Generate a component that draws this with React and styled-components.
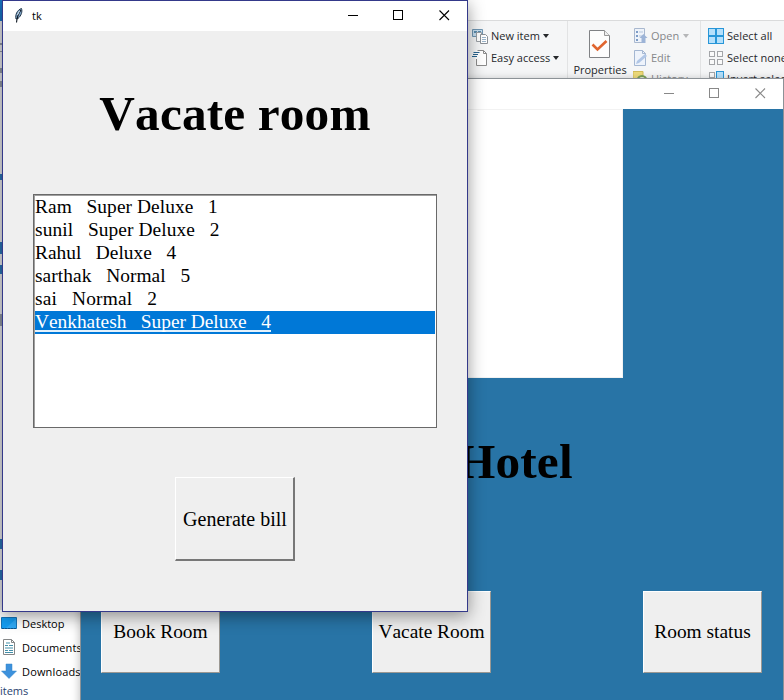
import React from "react";
import styled, { createGlobalStyle } from "styled-components";

const Global = createGlobalStyle`
  * { box-sizing: border-box; }
  body { margin: 0; background: #fff; overflow: hidden; }
`;

const Screen = styled.div`
  position: relative;
  width: 784px;
  height: 700px;
  overflow: hidden;
  background: #fff;
  font-family: "Open Sans", "Noto Sans", sans-serif;
  font-size: 11px;
  color: #1e1e1e;
`;

/* ---------- file explorer ---------- */
const Explorer = styled.div`
  display: flex;
  flex-direction: column;
  height: 700px;
`;
const ExplorerTop = styled.div`
  height: 21px;
  border-bottom: 1px solid #dadbdc;
`;
const Ribbon = styled.div`
  display: flex;
  height: 92px;
  padding-left: 468px;
  background: #f5f6f7;
  border-bottom: 1px solid #dadbdc;
`;
const RibbonGroup = styled.div`
  width: ${(p) => p.$w}px;
  flex: none;
  display: flex;
  border-right: 1px solid #e2e3e4;
`;
const RibbonColumn = styled.div`
  display: flex;
  flex-direction: column;
  padding-top: 4px;
  padding-left: ${(p) => p.$left || 0}px;
`;
const RibbonItem = styled.div`
  display: flex;
  align-items: center;
  height: ${(p) => p.$h || 22}px;
  gap: ${(p) => p.$gap || 3}px;
  white-space: nowrap;
  letter-spacing: ${(p) => p.$track || 0}px;
  color: ${(p) => (p.$off ? "#85878a" : "#26282b")};
  svg { flex: none; }
`;
const Label = styled.span`
  margin-top: -1px;
`;
const BigItem = styled.div`
  display: flex;
  flex-direction: column;
  align-items: center;
  width: 64px;
  padding-top: 9px;
  gap: 3px;
  color: #26282b;
  line-height: 15px;
`;
const Caret = styled.span`
  border: 3.5px solid transparent;
  border-top: 4px solid ${(p) => (p.$off ? "#b5b6b8" : "#26282b")};
  border-bottom: 0;
  margin: -1px 0 0 1px;
`;
const NavPane = styled.div`
  flex: 1;
  display: flex;
  flex-direction: column;
  justify-content: flex-end;
  width: 81px;
  overflow: hidden;
`;
const NavItem = styled.div`
  display: flex;
  align-items: center;
  gap: 5px;
  height: 24px;
  padding-left: 1px;
  white-space: nowrap;
  letter-spacing: ${(p) => p.$track || 0}px;
  color: #000;
  svg { flex: none; }
`;
const Status = styled.div`
  height: 17px;
  line-height: 16px;
  color: #29436f;
`;
const EdgeMarks = styled.svg`
  position: absolute;
  left: 0;
  top: 0;
`;

/* ---------- windows ---------- */
const Window = styled.section`
  position: absolute;
  left: ${(p) => p.$x}px;
  top: ${(p) => p.$y}px;
  width: ${(p) => p.$w}px;
  height: ${(p) => p.$h}px;
  display: flex;
  flex-direction: column;
  border: 1px solid ${(p) => p.$edge};
  background: ${(p) => p.$bg};
  box-shadow: ${(p) => p.$shadow};
  font-family: "Liberation Serif", "Times New Roman", serif;
  font-kerning: none;
  color: #000;
`;
const TitleBar = styled.header`
  flex: none;
  display: flex;
  align-items: center;
  height: ${(p) => p.$h}px;
  padding: 0 0 2px 10px;
  background: #fff;
  font-family: "Open Sans", "Noto Sans", sans-serif;
  font-size: 11px;
`;
const Caption = styled.span`
  flex: 1;
  padding-left: 7px;
`;
const Controls = styled.div`
  display: flex;
  margin-right: -1px;
  color: ${(p) => p.$color};
`;
const Control = styled.span`
  display: flex;
  justify-content: center;
  width: ${(p) => p.$w || 46}px;
`;
const Heading = styled.h1`
  margin: 0;
  font-size: 49.3px;
  line-height: 56px;
  font-weight: 700;
  letter-spacing: 0.15px;
  text-align: center;
  white-space: nowrap;
`;
const VacateBody = styled.main`
  flex: 1;
  display: flex;
  flex-direction: column;
  align-items: center;
  padding-top: 55px;
`;
const GuestList = styled.ul`
  list-style: none;
  width: 404px;
  height: 234px;
  margin: 52px 0 49px;
  padding: 1px;
  border: 1px solid #696969;
  box-shadow: inset 1px 1px 0 #a0a0a0;
  background: #fff;
  font-size: 19.4px;
`;
const Guest = styled.li`
  height: 23px;
  line-height: 22px;
  white-space: pre;
  letter-spacing: ${(p) => p.$track || 0}px;
  color: ${(p) => (p.$selected ? "#fff" : "#000")};
  background: ${(p) => (p.$selected ? "#0078d7" : "transparent")};
  span {
    display: inline-block;
    height: 21px;
    border-bottom: ${(p) => (p.$selected ? "2px solid #e4f1fb" : "0")};
  }
`;
const Button = styled.button`
  width: ${(p) => (p.$deep ? 120 : 119)}px;
  height: ${(p) => (p.$deep ? 84 : 82)}px;
  flex: none;
  padding: ${(p) => (p.$deep ? "1px 0 0 1px" : "0")};
  border: solid;
  border-width: 1px ${(p) => (p.$deep ? 2 : 1)}px ${(p) => (p.$deep ? 2 : 1)}px 1px;
  border-color: #fff ${(p) => (p.$deep ? "#777 #777" : "#9b9893 #9b9893")} #fff;
  background: #efefef;
  font: ${(p) => (p.$deep ? 20 : 19.4)}px "Liberation Serif", "Times New Roman", serif;
  font-kerning: none;
  white-space: nowrap;
  color: #000;
`;
const HotelBody = styled.main`
  flex: 1;
  display: flex;
  flex-direction: column;
  background: #2874a6;
`;
const Photo = styled.div`
  width: 382px;
  height: 269px;
  margin-left: 160px;
  background: #fff;
  border: solid #f2f2f2;
  border-width: 1px 1px 1px 0;
`;
const HotelTitle = styled(Heading)`
  margin: 56px 0 101px;
  padding-left: 376px;
  text-align: left;
`;
const ButtonRow = styled.div`
  display: flex;
  justify-content: space-between;
  padding: 0 21px 0 20px;
`;

const guests = [
  { text: "Ram   Super Deluxe   1", track: 0.06 },
  { text: "sunil   Super Deluxe   2", track: 0.08 },
  { text: "Rahul   Deluxe   4", track: 0 },
  { text: "sarthak   Normal   5", track: 0.06 },
  { text: "sai   Normal   2", track: 0.16 },
  { text: "Venkhatesh   Super Deluxe   4", selected: true, track: -0.02 },
];

const WindowControls = ({ color }) => (
  <Controls $color={color}>
    <Control $w={45}>
      <svg width="11" height="11"><path d="M0 5.5h10" stroke="currentColor" /></svg>
    </Control>
    <Control $w={45}>
      <svg width="11" height="11"><rect x=".5" y=".5" width="9" height="9" fill="none" stroke="currentColor" /></svg>
    </Control>
    <Control $w={47}>
      <svg width="11" height="11"><path d="M.5 .5l9.5 9.5M10 .5L.5 10" stroke="currentColor" strokeWidth="1.1" /></svg>
    </Control>
  </Controls>
);

const Feather = () => (
  <svg width="12" height="17" viewBox="0 0 12 17">
    <path d="M3 12C2 8 4 3 8.500 1.500c1 3 0 7-3.500 10z" fill="#7fa4c7" stroke="#24384c" />
    <path d="M8 3C5 7 4 10 3.500 15.500" fill="none" stroke="#0b141e" strokeWidth="1.1" />
    <path d="M4.500 8l2-4" stroke="#d6e8f6" />
  </svg>
);
const NewItemIcon = () => (
  <svg width="17" height="17">
    <path d="M.5 1.5h10v7h-10z" fill="#c8e0f1" stroke="#6f96b3" />
    <path d="M2 3h3v2H2zM6 3h3v1H6z" fill="#5b8cad" />
    <path d="M4.500 4.500h5v9h-5z" fill="#fff" stroke="#9a9fa4" />
    <path d="M8.500 6.500h5l2 2v7h-7z" fill="#fff" stroke="#8b9096" />
    <path d="M10 9.500h4M10 11.500h4M10 13.500h4" stroke="#9ab4ca" />
  </svg>
);
const EasyIcon = () => (
  <svg width="17" height="17">
    <path d="M3.500.500h8l3 3v12h-11z" fill="#fff" />
    <path d="M4.500 9v6.500h10v-12l-3-3h-6" fill="none" stroke="#8b8b8b" />
    <path d="M11.500.500v3h3" fill="none" stroke="#8b8b8b" />
    <path d="M1.500 2.500h6M1 4.500h5M0 6.500h5" stroke="#28648f" />
  </svg>
);
const PropertiesIcon = () => (
  <svg width="22" height="29">
    <path d="M.5.500h15l5 5v22H.500z" fill="#fdfdfd" stroke="#808285" />
    <path d="M15.500.500v5h5" fill="#eee" stroke="#999" />
    <path d="M3.500 14.500l5 5 9-8.500" fill="none" stroke="#e0652f" strokeWidth="2.600" />
  </svg>
);
const OpenIcon = () => (
  <svg width="15" height="17">
    <path d="M1.500.500h10v14h-10z" fill="#eef3fa" stroke="#a9b8cf" />
    <path d="M3 3h2v2H3zM3 7h2v2H3zM3 11h2v2H3z" fill="#7d9cc7" />
    <path d="M6 4h4M6 8h4" stroke="#b5c5dc" />
    <path d="M10.500 6l4 4h-2v5h-4v-5h-2z" fill="#9db4d7" />
  </svg>
);
const EditIcon = () => (
  <svg width="15" height="17">
    <path d="M1.500.500h8l3 3v12h-11z" fill="#eef3fb" stroke="#a4b7d2" />
    <path d="M9.500.500v3h3" fill="none" stroke="#a4b7d2" />
    <path d="M3 14l1-3 8-7 2 2-8 7z" fill="#b0c6e6" />
  </svg>
);
const HistoryIcon = () => (
  <svg width="16" height="17">
    <path d="M0 .5h10v13H0z" fill="#eedb7a" stroke="#d2bd59" />
    <circle cx="9" cy="9.500" r="4.500" fill="#e8efdb" stroke="#7da258" strokeWidth="2" />
  </svg>
);
const SelectIcon = ({ kind }) => (
  <svg width="16" height="16">
    {[0, 1, 2, 3].map((i) => {
      const x = (i % 2) * 8;
      const y = i < 2 ? 0 : 8;
      const on = kind === "all" || (kind === "invert" && i === 1);
      return on ? (
        <rect key={i} x={x + 0.5} y={y + 0.5} width="7" height="7" fill="#b5e0fb" stroke="#2796d8" />
      ) : (
        <rect key={i} x={x + 1.5} y={y + 1.5} width="5" height="5" fill="#fafafa" stroke="#a3a5a8" />
      );
    })}
  </svg>
);
const DesktopIcon = () => (
  <svg width="16" height="16">
    <path d="M.500 2.500h15v11H.500z" fill="#149df2" stroke="#1675b8" />
    <path d="M5 13L15 4v9z" fill="#2fa9f6" />
    <path d="M1 13.500h14" stroke="#0e548c" strokeDasharray="2 1" />
  </svg>
);
const DocumentIcon = () => (
  <svg width="16" height="16">
    <path d="M2.500.500h8l3 3v12h-11z" fill="#fff" stroke="#858788" />
    <path d="M10.500.500v3h3" fill="none" stroke="#858788" />
    <path d="M4 6.500h3M8 6.500h4M4 9h8M4 11.500h3M8 11.500h4M4 13.500h8M5 4h4" stroke="#438fa9" />
  </svg>
);
const DownloadIcon = () => (
  <svg width="16" height="16">
    <path d="M5 1h6v7h4.500L8 15.500.500 8H5z" fill="#3d91dc" stroke="#3685cb" strokeWidth=".5" />
  </svg>
);

export default function App() {
  return (
    <Screen>
      <Global />
      <Explorer>
        <ExplorerTop />
        <Ribbon>
          <RibbonGroup $w={100}>
            <RibbonColumn $left={4}>
              <RibbonItem $gap={2}><NewItemIcon /><Label>New item</Label> <Caret /></RibbonItem>
              <RibbonItem $gap={2}><EasyIcon /><Label>Easy access</Label> <Caret /></RibbonItem>
            </RibbonColumn>
          </RibbonGroup>
          <RibbonGroup $w={133}>
            <BigItem><PropertiesIcon />Properties</BigItem>
            <RibbonColumn $left={1}>
              <RibbonItem $off><OpenIcon /><Label>Open</Label> <Caret $off /></RibbonItem>
              <RibbonItem $off><EditIcon /><Label>Edit</Label></RibbonItem>
              <RibbonItem $off $gap={2} $h={20}><HistoryIcon /><Label>History</Label></RibbonItem>
            </RibbonColumn>
          </RibbonGroup>
          <RibbonColumn $left={7}>
            <RibbonItem $track={0.05}><SelectIcon kind="all" /><Label>Select all</Label></RibbonItem>
            <RibbonItem $track={0.05}><SelectIcon kind="none" /><Label>Select none</Label></RibbonItem>
            <RibbonItem $h={20}><SelectIcon kind="invert" /><Label>Invert selection</Label></RibbonItem>
          </RibbonColumn>
        </Ribbon>
        <NavPane>
          <NavItem><DesktopIcon />Desktop</NavItem>
          <NavItem $track={0.1}><DocumentIcon />Documents</NavItem>
          <NavItem $track={0.15}><DownloadIcon />Downloads</NavItem>
          <Status>items</Status>
        </NavPane>
      </Explorer>
      <EdgeMarks width="2" height="610">
        <path d="M0 0h2v21H0z" fill="#1874c4" />
        <path d="M0 21h2v589H0z" fill="#e4e5e8" />
        <path d="M0 174h2v6H0zM0 242h2v12H0zM0 265h2v9H0zM0 539h2v10H0zM0 570h2v10H0z" fill="#2a73b5" />
        <path d="M0 314h2v12H0zM0 43h2v2H0zM0 51h2v1H0zM0 68h2v5H0zM0 81h2v6H0z" fill="#9298a2" />
      </EdgeMarks>

      <Window $x={80} $y={78} $w={704} $h={640} $edge="#8c9297" $bg="#fff" $shadow="0 2px 9px rgba(0,0,0,.28)">
        <TitleBar $h={30}>
          <Caption />
          <WindowControls color="#888" />
        </TitleBar>
        <HotelBody>
          <Photo />
          <HotelTitle>Hotel</HotelTitle>
          <ButtonRow>
            <Button>Book Room</Button>
            <Button>Vacate Room</Button>
            <Button>Room status</Button>
          </ButtonRow>
        </HotelBody>
      </Window>

      <Window $x={2} $y={0} $w={466} $h={612} $edge="#34398a" $bg="#efefef" $shadow="0 4px 16px rgba(0,0,0,.42)">
        <TitleBar $h={30}>
          <Feather />
          <Caption>tk</Caption>
          <WindowControls color="#000" />
        </TitleBar>
        <VacateBody>
          <Heading>Vacate room</Heading>
          <GuestList>
            {guests.map((g) => (
              <Guest key={g.text} $selected={g.selected} $track={g.track}><span>{g.text}</span></Guest>
            ))}
          </GuestList>
          <Button $deep>Generate bill</Button>
        </VacateBody>
      </Window>
    </Screen>
  );
}
